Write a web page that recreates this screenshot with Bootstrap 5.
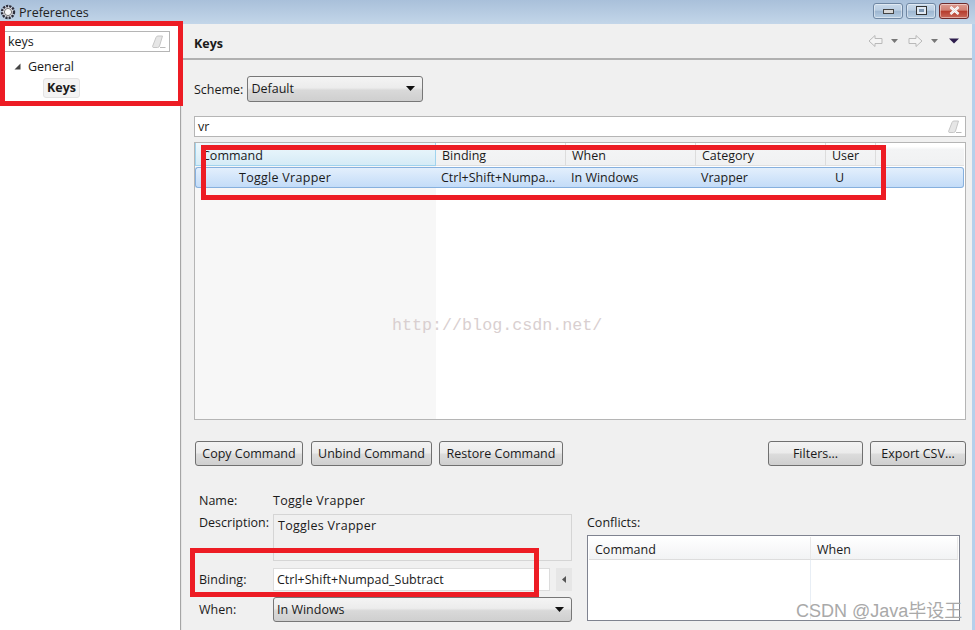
<!DOCTYPE html>
<html lang="en">
<head>
<meta charset="utf-8">
<title>Preferences</title>
<link href="https://cdn.jsdelivr.net/npm/bootstrap@5.3.0/dist/css/bootstrap.min.css" rel="stylesheet">
<style>
html,body{height:100%;}
body{width:975px;height:630px;overflow:hidden;background:#f0f0f0;font:12.5px/17px "Open Sans",sans-serif;font-kerning:none;color:#1a1a1a;position:relative;}
.win-title{height:24px;background:linear-gradient(180deg,#a9c0da,#c3d6e9);padding-left:0;}
.win-title .ttl{margin-left:3px;color:#222;}
.win-btn{width:30px;height:16px;border:1px solid #6f87a3;border-radius:3px;background:linear-gradient(180deg,#c8d9ea 0,#b9cde2 45%,#9db6d0 50%,#b6cde3 100%);box-shadow:inset 0 0 0 1px rgba(255,255,255,.45);}
.win-btn.shut{background:linear-gradient(180deg,#dd9b90 0,#d08072 45%,#b53b2c 50%,#c9695a 100%);border-color:#6e2a2a;}
.ctrl-set{gap:3px;margin-right:6px;margin-top:-3px;}
.main-area{height:606px;}
.tree-pane{width:180px;background:#fff;padding:7px 4px 0 4px;}
.side-rule{width:2px;background:#a5a5a5;border-right:1px solid #e6e6e6;}
.right-pane{flex:1;min-width:0;}
.edge-strip{width:3px;background:#b5d0ec;}
.plain-input{height:21px;border:1px solid #b5b5b5;background:#fff;border-radius:0;padding:0 3px;font:inherit;color:inherit;line-height:19px;}
.tree-pane .plain-input{width:166px;margin-left:0;}
.erase-ic{flex:none;}
.tree-node{padding-left:10px;margin-top:6px;gap:7px;}
.tree-leaf{margin-left:39px;margin-top:3px;display:inline-block;padding:0 3px;height:20px;line-height:18px;background:#f3f3f3;border:1px solid #e3e3e3;border-radius:3px;font-weight:700;}
.pane-head{height:36px;border-bottom:2px solid #b0b0b0;padding:5px 12px 0 12px;}
.nav-arrows{margin-top:-6px;}
.pane-body{padding:16px 6px 0 12px;}
.scheme-row{height:26px;margin-bottom:14px;}
.native-sel{border:1px solid #777;border-radius:3px;background:linear-gradient(180deg,#f4f4f4 0,#ececec 45%,#d9d9d9 55%,#cfcfcf 100%);height:26px;padding:0 3px;}
.scheme-sel{width:176px;margin-left:4px;padding-bottom:2px;}
.keys-grid{height:278px;border:1px solid #b5b5b5;background:linear-gradient(90deg,#f7f7f7 0,#f7f7f7 241px,#fff 241px);margin-top:5px;padding-right:1px;}
.keys-grid table,.conf-grid table{table-layout:fixed;border-collapse:separate;border-spacing:0;width:100%;margin:0;}
.keys-grid th,.keys-grid td,.conf-grid th{font-weight:400;padding:0 0 0 6px;white-space:nowrap;overflow:hidden;background:transparent;color:inherit;}
.keys-grid th{height:23px;padding-top:3px;border-right:1px solid #dcdcdc;border-bottom:1px solid #e0e0e0;background:linear-gradient(180deg,#fff 0,#fff 15%,#f3f4f5 30%,#f0f1f2 100%);}
.keys-grid th.hot{background:linear-gradient(180deg,#eef8fd,#d5ebf6);border-right:1px solid #9fd3ee;border-bottom:1px solid #9fd3ee;border-left:1px solid #9fd3ee;}
.keys-grid th.tail{border-right:0;}
.sel-row td{height:21px;padding:0 0 0 5px;background:linear-gradient(180deg,#e3effc,#c3dcf8);border-top:1px solid #86b0de;border-bottom:1px solid #86b0de;}
.sel-row td:first-child{border-left:1px solid #86b0de;border-radius:3px 0 0 3px;padding-left:43px;}
.sel-row td:last-child{border-right:1px solid #86b0de;border-radius:0 3px 3px 0;}
.sel-row td.user-cell{padding-left:9px;}
.gap-row td{height:1px;padding:0;}
.wide-name{letter-spacing:.28px;}
.push-btn{height:25px;padding:0;font:inherit;color:#1a1a1a;border:1px solid #707070;border-radius:3px;background:linear-gradient(180deg,#f3f3f3 0,#ebebeb 48%,#dcdcdc 52%,#cfcfcf 100%);}
.push-btn:hover{border-color:#707070;color:#1a1a1a;}
.btn-row{margin-top:21px;height:25px;padding-left:1px;}
.copy-btn{width:108px;}
.unbind-btn{width:121px;margin-left:8px;}
.restore-btn{width:124px;margin-left:7px;}
.filter-btn{width:95px;}
.export-btn{width:96px;margin-left:7px;}
.lower-zone{margin-top:26px;}
.left-col{width:378px;}
.lbl{width:79px;flex:none;padding-left:5px;}
.name-row{height:16px;margin-bottom:6px;}
.desc-box{height:47px;width:299px;border:1px solid #d5d5d5;background:#f0f0f0;padding:2px 4px;}
.bind-row{margin-top:7px;}
.when-row{margin-top:6px;}
.bind-input{width:277px;height:23px;border:1px solid #dcdcdc;}
.arrow-btn{width:16px;height:23px;margin-left:6px;background:#e6e6e6;}
.when-sel{width:299px;height:25px;margin-left:0;}
.conf-col{width:373px;margin-left:15px;padding-top:22px;}
.conf-grid{height:86px;border:1px solid #7f8390;background:#fff;margin-top:4px;padding:1px;position:relative;}
.conf-grid th{height:23px;padding-left:6px;padding-top:2px;border-right:1px solid #e8e8e8;border-bottom:1px solid #ddd;background:linear-gradient(180deg,#fff 0,#f2f3f4 100%);}
.conf-grid .vline{position:absolute;left:222px;top:24px;bottom:1px;width:1px;background:#e8eef5;}
.red-mark{position:absolute;border:5px solid #ed1c24;pointer-events:none;}
.mark-a{left:0;top:21px;width:183px;height:85px;}
.mark-b{left:201px;top:145px;width:685px;height:55px;}
.mark-c{left:190px;top:548px;width:349px;height:49px;}
.wm-blog{position:absolute;left:392px;top:316px;font:16.7px/20px "Liberation Mono",monospace;color:#d9cfd0;white-space:nowrap;}
.wm-csdn{position:absolute;left:796px;top:600px;font:18px/22px "Liberation Sans","Noto Sans CJK SC",sans-serif;color:#a9a9a9;white-space:nowrap;}
</style>
</head>
<body>
<div class="win-title d-flex align-items-center">
  <svg width="16" height="16" viewBox="0 0 16 16" class="ms-0"><circle cx="8" cy="8" r="6" fill="#e8e8ee" stroke="#2d2d3a" stroke-width="2.4" stroke-dasharray="2.2 1"/><circle cx="8" cy="8" r="3.6" fill="#f8f8fa" stroke="#555" stroke-width=".8"/></svg>
  <span class="ttl">Preferences</span>
  <div class="ms-auto d-flex ctrl-set">
    <div class="win-btn d-flex align-items-center justify-content-center"><svg width="11" height="6"><rect x=".5" y="1.5" width="10" height="4" fill="#d8d8d8" stroke="#444"/></svg></div>
    <div class="win-btn d-flex align-items-center justify-content-center"><svg width="11" height="9"><rect x=".5" y=".5" width="10" height="8" fill="#dfe8f2" stroke="#333"/><rect x="3" y="3" width="5" height="3" fill="#7d97b3"/></svg></div>
    <div class="win-btn shut d-flex align-items-center justify-content-center"><svg width="11" height="9"><path d="M1.5 1l8 7M9.5 1l-8 7" stroke="#fff" stroke-width="2.6"/><path d="M1.5 1l8 7M9.5 1l-8 7" stroke="#d8d8d8" stroke-width=".8"/></svg></div>
  </div>
</div>
<div class="main-area d-flex">
  <div class="tree-pane">
    <div class="plain-input d-flex align-items-center justify-content-between">
      <span>keys</span>
      <svg class="erase-ic" width="14" height="14" viewBox="0 0 14 14"><path d="M.5 11.500L4 2.500Q4.500 1 6 1H10.500L7.500 11Q7 12.500 5.500 12.500H2Q.5 12.500 .5 11.500Z" fill="#e6e6e6" stroke="#c6c6c6"/><path d="M8 12.500h5.500" stroke="#bbb"/></svg>
    </div>
    <div class="tree-node d-flex align-items-center"><svg width="7" height="7" viewBox="0 0 7 7"><path d="M0.5 6.500H6.500V0.500Z" fill="#444"/></svg><span>General</span></div>
    <div class="tree-leaf">Keys</div>
  </div>
  <div class="side-rule"></div>
  <div class="right-pane">
    <div class="pane-head d-flex align-items-center justify-content-between">
      <strong>Keys</strong>
      <svg width="92" height="14" viewBox="0 0 92 14" class="nav-arrows"><path d="M1 7L7 1.500V4.500H14V9.500H7V12.500Z" fill="#f4f4f4" stroke="#b9b9b9"/><path d="M23 5h7l-3.500 4z" fill="#777"/><path d="M54 7L48 1.500V4.500H41V9.500H48V12.500Z" fill="#f4f4f4" stroke="#b9b9b9"/><path d="M63 5h7l-3.500 4z" fill="#777"/><path d="M81 4.500h10l-5 5z" fill="#2d1d4d"/></svg>
    </div>
    <div class="pane-body">
      <div class="scheme-row d-flex align-items-center">
        <span>Scheme:</span>
        <div class="native-sel scheme-sel d-flex align-items-center justify-content-between"><span>Default</span><svg width="9" height="5" class="me-1"><path d="M0 0h9L4.500 5z" fill="#111"/></svg></div>
      </div>
      <div class="plain-input d-flex align-items-center justify-content-between">
        <span>vr</span>
        <svg class="erase-ic" width="14" height="14" viewBox="0 0 14 14"><path d="M.5 11.500L4 2.500Q4.500 1 6 1H10.500L7.500 11Q7 12.500 5.500 12.500H2Q.5 12.500 .5 11.500Z" fill="#e6e6e6" stroke="#c6c6c6"/><path d="M8 12.500h5.500" stroke="#bbb"/></svg>
      </div>
      <div class="keys-grid">
        <table>
          <colgroup><col style="width:241px"><col style="width:130px"><col style="width:130px"><col style="width:130px"><col style="width:50px"><col></colgroup>
          <thead><tr><th class="hot">Command</th><th>Binding</th><th>When</th><th>Category</th><th>User</th><th class="tail"></th></tr></thead>
          <tbody>
            <tr class="gap-row"><td colspan="6"></td></tr>
            <tr class="sel-row"><td class="wide-name">Toggle Vrapper</td><td>Ctrl+Shift+Numpa...</td><td>In Windows</td><td>Vrapper</td><td class="user-cell">U</td><td></td></tr>
          </tbody>
        </table>
      </div>
      <div class="btn-row d-flex">
        <button type="button" class="btn push-btn copy-btn">Copy Command</button>
        <button type="button" class="btn push-btn unbind-btn">Unbind Command</button>
        <button type="button" class="btn push-btn restore-btn">Restore Command</button>
        <button type="button" class="btn push-btn filter-btn ms-auto">Filters...</button>
        <button type="button" class="btn push-btn export-btn">Export CSV...</button>
      </div>
      <div class="lower-zone d-flex">
        <div class="left-col">
          <div class="d-flex name-row"><span class="lbl">Name:</span><span class="wide-name">Toggle Vrapper</span></div>
          <div class="d-flex"><span class="lbl">Description:</span><div class="desc-box wide-name">Toggles Vrapper</div></div>
          <div class="d-flex align-items-center bind-row"><span class="lbl">Binding:</span><div class="plain-input bind-input d-flex align-items-center">Ctrl+Shift+Numpad_Subtract</div><div class="arrow-btn d-flex align-items-center justify-content-center"><svg width="4" height="7"><path d="M4 0v7L0 3.500z" fill="#555"/></svg></div></div>
          <div class="d-flex align-items-center when-row"><span class="lbl">When:</span><div class="native-sel when-sel d-flex align-items-center justify-content-between"><span>In Windows</span><svg width="9" height="5" class="me-1"><path d="M0 0h9L4.500 5z" fill="#111"/></svg></div></div>
        </div>
        <div class="conf-col">
          <div>Conflicts:</div>
          <div class="conf-grid">
            <table><colgroup><col style="width:222px"><col></colgroup><thead><tr><th>Command</th><th>When</th></tr></thead></table>
            <div class="vline"></div>
          </div>
        </div>
      </div>
    </div>
  </div>
  <div class="edge-strip"></div>
</div>
<div class="red-mark mark-a"></div>
<div class="red-mark mark-b"></div>
<div class="red-mark mark-c"></div>
<div class="wm-blog">http://blog.csdn.net/</div>
<div class="wm-csdn">CSDN @Java毕设王</div>
<script src="https://cdn.jsdelivr.net/npm/bootstrap@5.3.0/dist/js/bootstrap.bundle.min.js"></script>
</body>
</html>
